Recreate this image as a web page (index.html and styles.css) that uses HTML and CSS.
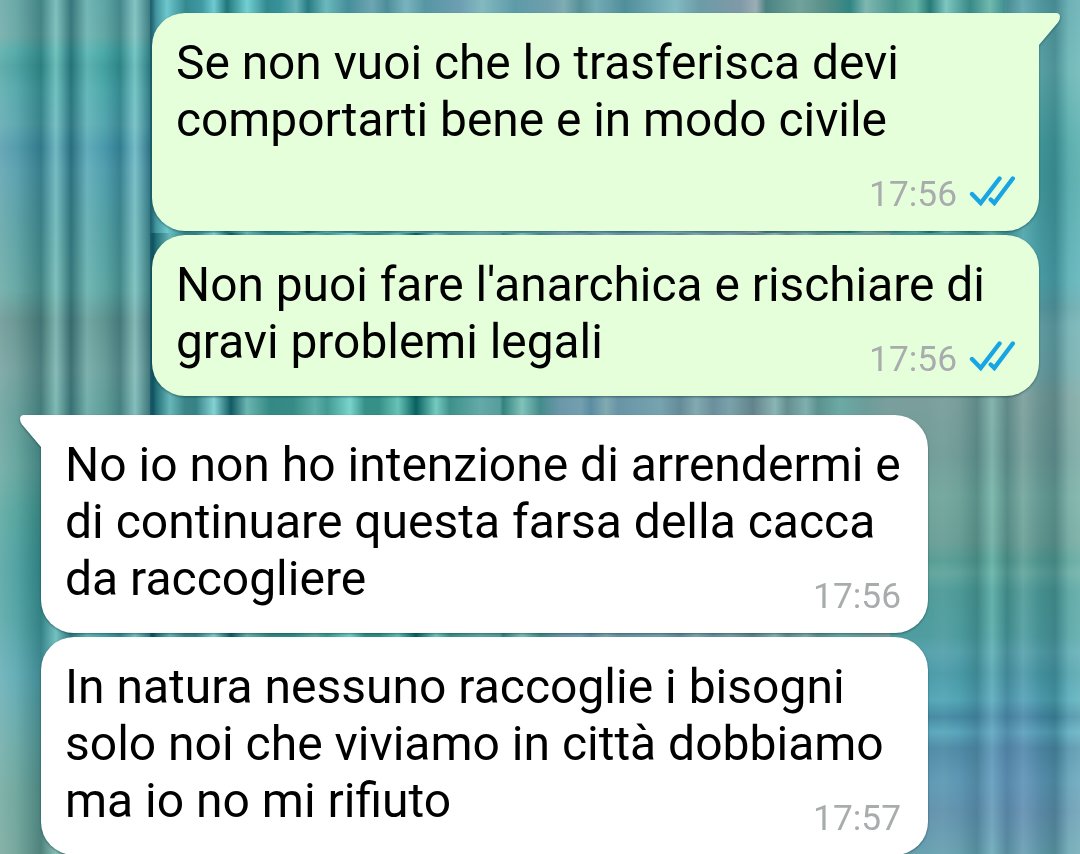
FILE: index.html
```html
<!DOCTYPE html>
<html lang="it">
<head>
  <meta charset="UTF-8">
  <title>Chat</title>
  <link rel="stylesheet" href="styles.css">
</head>
<body>

  <div class="chat">

    <div class="message sent first tall">
      <svg class="tail" width="23" height="34" viewBox="0 0 23 34"><path d="M0 0H18Q22 0 22 4Q22 7 20 9.500L1 32L0 34Z"/></svg>
      <p class="text">Se non vuoi che lo trasferisca devi<br>comportarti bene e in modo civile</p>
      <div class="meta">
        <span class="time">17:56</span>
        <svg class="ticks" width="48" height="31" viewBox="0 0 48 31"><path d="M4 19L12.700 28L31.500 3.500M22.700 24.500L26.300 28L44.800 3.500"/></svg>
      </div>
    </div>

    <div class="message sent">
      <p class="text">Non puoi fare l'anarchica e rischiare di<br>gravi problemi legali</p>
      <div class="meta">
        <span class="time">17:56</span>
        <svg class="ticks" width="48" height="31" viewBox="0 0 48 31"><path d="M4 19L12.700 28L31.500 3.500M22.700 24.500L26.300 28L44.800 3.500"/></svg>
      </div>
    </div>

    <div class="message received first">
      <svg class="tail" width="23" height="34" viewBox="0 0 23 34"><path d="M23 0H5Q1 0 1 4Q1 7 3 9.500L22 32L23 34Z"/></svg>
      <p class="text">No io non ho intenzione di arrendermi e<br>di continuare questa farsa della cacca<br>da raccogliere</p>
      <div class="meta">
        <span class="time">17:56</span>
      </div>
    </div>

    <div class="message received">
      <p class="text">In natura nessuno raccoglie i bisogni<br>solo noi che viviamo in città dobbiamo<br>ma io no mi rifiuto</p>
      <div class="meta">
        <span class="time">17:57</span>
      </div>
    </div>

  </div>

</body>
</html>
```
FILE: styles.css
```css
* {
  box-sizing: border-box;
}

body {
  margin: 0;
  font-family: Roboto, "Noto Sans", sans-serif;
  background-color: #4a9da0;
}

/* blurred striped wallpaper: left column, upper and middle bands, right column */
.chat {
  display: flex;
  flex-direction: column;
  height: 854px;
  padding: 13px 41px 0;
  overflow: hidden;
  background-image:
    linear-gradient(to right, rgba(255,255,255,.22) 0, rgba(255,255,255,.12) 16px, rgba(0,40,50,.22) 41px, rgba(200,255,250,.36) 56px, rgba(0,50,65,.36) 71px, rgba(200,255,255,.26) 87px, rgba(160,230,240,.1) 105px, rgba(0,50,70,.2) 120px, rgba(200,255,255,.4) 135px, rgba(0,50,70,.36) 151px, rgba(0,50,70,0) 156px),
    linear-gradient(to bottom, #559d9c 0, #5a9f9c 35px, #3fa19e 52px, #379795 66px, #429fa1 90px, #4a9da6 125px, #3e8fa3 147px, #4896a6 170px, #4b989d 220px, #559e99 290px, #568985 320px, #629591 370px, #54948f 415px, #559c94 470px, #429a93 515px, #3c9797 570px, #419a9b 620px, #51a3ad 675px, #5ca19f 740px, #5f9d93 790px, #659c91 854px),
    linear-gradient(to right, #2b7882 0, #6dc7cc 17px, #348990 36px, #409aa3 52px, #6fcad1 64px, #1f777c 77px, #72d0d3 97px, #328990 117px, #38929a 130px, #67b3b7 146px, #287b84 158px, #6bb9bd 176px, #458e9b 198px, #6da6b2 222px, #4d8e9b 237px, #79b4be 256px, #5796a4 275px, #6d9fb2 310px, #83b9c0 332px, #5e9ba8 365px, #6f9fac 400px, #7fadb3 414px, #579097 430px, #73abb4 446px, #508e9b 475px, #83bac1 525px, #6b9ca7 550px, #8099a7 590px, #9aaeb4 606px, #4b8283 616px, #71a39b 650px, #598f89 675px, #2f8583 700px, #80b7b2 716px, #48958f 745px, #68b5a8 766px, #267a78 780px, #7fc6c0 796px, #388987 820px, #71b9ae 840px, #3f8f92 855px),
    linear-gradient(to right, #2c737e 0, #125d69 3px, #67b7b8 20px, #3b8488 35px, #378287 46px, #85d2d3 64px, #115a63 81px, #6bb5b1 97px, #358984 120px, #368b86 143px, #5dafa8 165px, #409a93 177px, #79d4cb 200px, #359188 215px, #359087 229px, #67c3b7 248px, #07615f 266px, #76cbc0 286px, #3e918b 300px, #63aaa8 330px, #569d9b 350px, #32827f 353px, #80c3bb 372px, #448c8c 390px, #6b97aa 410px, #739faf 431px, #5b8da2 441px, #81aab2 456px, #6994a6 468px, #77a3af 510px, #658b99 530px, #82aab0 546px, #6b8f9c 563px, #7aa2ab 580px, #63838b 603px, #8ab5b5 625px, #648e90 637px, #7fafaf 656px, #5b9190 668px, #6caaa5 690px, #6b9d99 715px, #7b9f9c 740px),
    radial-gradient(closest-side, rgba(108, 138, 195, .4), rgba(108, 138, 195, 0)),
    linear-gradient(to right, rgba(0,60,60,0) 0, rgba(255,255,255,.04) 18px, rgba(0,60,60,.02) 34px, rgba(0,60,60,.22) 52px, rgba(180,255,240,.22) 67px, rgba(0,60,60,.22) 82px, rgba(255,255,255,.08) 98px, rgba(0,50,60,.12) 115px, rgba(0,50,60,.23) 130px, rgba(210,255,245,.15) 144px, rgba(210,255,245,.22) 155px),
    linear-gradient(to bottom, #5ca3ab 0, #64afb1 70px, #48a2a3 145px, #469fa2 180px, #53a9b2 280px, #5fa0a6 308px, #6da9ae 325px, #6fa6a9 370px, #7b9f9c 396px),
    linear-gradient(to bottom, #7b9f9c 40px, #719c98 100px, #72a69d 140px, #6b9f97 185px, #569d94 205px, #62a69e 217px, #4f9b99 235px, #4f9da0 280px, #58a3ae 296px, #4b9ba8 318px, #53a7b7 344px, #4589a2 361px, #5aa8bd 376px, #4f8ba6 392px, #5e9ab5 425px, #6393ae 455px, #6aa2b1 498px);
  background-size: 156px 854px, 150px 854px, 855px 233px, 740px 621px, 110px 260px, 155px 854px, 75px 396px, 190px 498px;
  background-position: 0 0, 0 0, 150px 0, 150px 233px, 950px 640px, 925px 0, 1005px 0, 890px 356px;
  background-repeat: no-repeat;
}

.message {
  display: grid;
  position: relative;
  flex-shrink: 0;
  width: 887px;
  margin-bottom: 4px;
  padding: 21.500px 25px 25.500px 24px;
  border-radius: 33px;
  filter: drop-shadow(0 1px 1px rgba(0, 45, 50, .5));
}

.sent {
  align-self: flex-end;
  background-color: #e6ffdb;
}

.sent + .received {
  margin-top: 14.500px;
}

.received {
  align-self: flex-start;
  background-color: #fff;
}

.tall {
  min-height: 218px;
}

.sent.first {
  border-top-right-radius: 0;
}

.received.first {
  border-top-left-radius: 0;
}

.tail {
  position: absolute;
  top: 0;
}

.sent .tail {
  right: -22px;
  fill: #e6ffdb;
}

.received .tail {
  left: -22px;
  fill: #fff;
}

.text {
  grid-area: 1 / 1;
  margin: 0;
  font-size: 48px;
  line-height: 57px;
  white-space: nowrap;
  color: #000;
}

.sent .text {
  font-size: 47.850px;
}

/* time sits in the bottom corner, next to the last line */
.meta {
  display: flex;
  grid-area: 1 / 1;
  align-self: end;
  justify-self: end;
  align-items: center;
  gap: 11px;
  height: 31px;
  margin-bottom: -4.500px;
}

.sent .meta {
  margin-right: -2px;
}

.received .meta {
  margin-right: 2px;
}

.time {
  font-size: 35.300px;
  line-height: 31px;
  color: #a9acad;
}

.ticks {
  margin-bottom: 8px;
  fill: none;
  stroke: #18a5e3;
  stroke-width: 4.400;
  stroke-linecap: round;
}
```
